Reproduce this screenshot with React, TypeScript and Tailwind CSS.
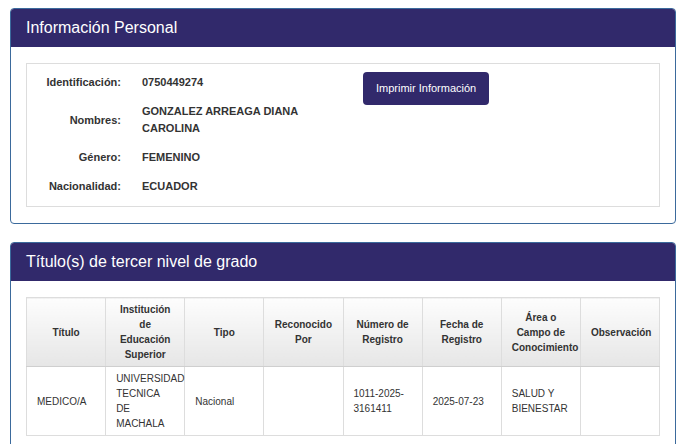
import React from "react";

const datos = [
  { label: "Identificación:", value: "0750449274" },
  { label: "Nombres:", value: "GONZALEZ ARREAGA DIANA CAROLINA" },
  { label: "Género:", value: "FEMENINO" },
  { label: "Nacionalidad:", value: "ECUADOR" },
];

const columnas = [
  "Título",
  "Institución de Educación Superior",
  "Tipo",
  "Reconocido Por",
  "Número de Registro",
  "Fecha de Registro",
  "Área o Campo de Conocimiento",
  "Observación",
];

const fila = [
  "MEDICO/A",
  "UNIVERSIDAD TECNICA DE MACHALA",
  "Nacional",
  "",
  "1011-2025-3161411",
  "2025-07-23",
  "SALUD Y BIENESTAR",
  "",
];

function Panel({ title, children }: { title: string; children: React.ReactNode }) {
  return (
    <section className="border border-[#3b6a9c] rounded-[4px] overflow-hidden bg-white">
      <div className="h-[38px] bg-[#31296b] px-[15px] flex items-center text-white text-[16px]">
        {title}
      </div>
      <div className="px-[15px] py-[16px]">{children}</div>
    </section>
  );
}

export default function App() {
  return (
    <div
      className="min-h-screen bg-white pl-[10px] pr-[5px] pt-[8px] text-[#333]"
      style={{ fontFamily: '"Liberation Sans", Arial, sans-serif' }}
    >
      <Panel title="Información Personal">
        <div className="border border-[#dddddd] flex pt-[4px] pb-[5px]">
          <div className="flex flex-col">
            {datos.map((d) => (
              <div key={d.label} className="flex items-center py-[6px] text-[11px] font-bold leading-[17px]">
                <div className="w-[94px] text-right">{d.label}</div>
                <div className="ml-[21px] w-[190px]">{d.value}</div>
              </div>
            ))}
          </div>
          <div className="ml-[31px] pt-[4px]">
            <button className="h-[33px] px-[13px] rounded-[4px] bg-[#31296b] text-white text-[11px]">
              Imprimir Información
            </button>
          </div>
        </div>
      </Panel>

      <div className="mt-[18px]">
        <Panel title="Título(s) de tercer nivel de grado">
          <table className="w-full table-fixed border-collapse text-[10px] leading-[15px]">
            <thead>
              <tr>
                {columnas.map((c) => (
                  <th
                    key={c}
                    className="border border-[#dddddd] border-b-[#cfcfcf] bg-gradient-to-b from-[#fdfdfd] to-[#e6e6e6] px-[10px] py-[4px] text-center align-middle font-bold"
                  >
                    {c}
                  </th>
                ))}
              </tr>
            </thead>
            <tbody>
              <tr>
                {fila.map((v, i) => (
                  <td
                    key={i}
                    className="border border-[#dddddd] px-[10px] py-[4px] text-left align-middle"
                  >
                    {v}
                  </td>
                ))}
              </tr>
            </tbody>
          </table>
        </Panel>
      </div>
    </div>
  );
}
